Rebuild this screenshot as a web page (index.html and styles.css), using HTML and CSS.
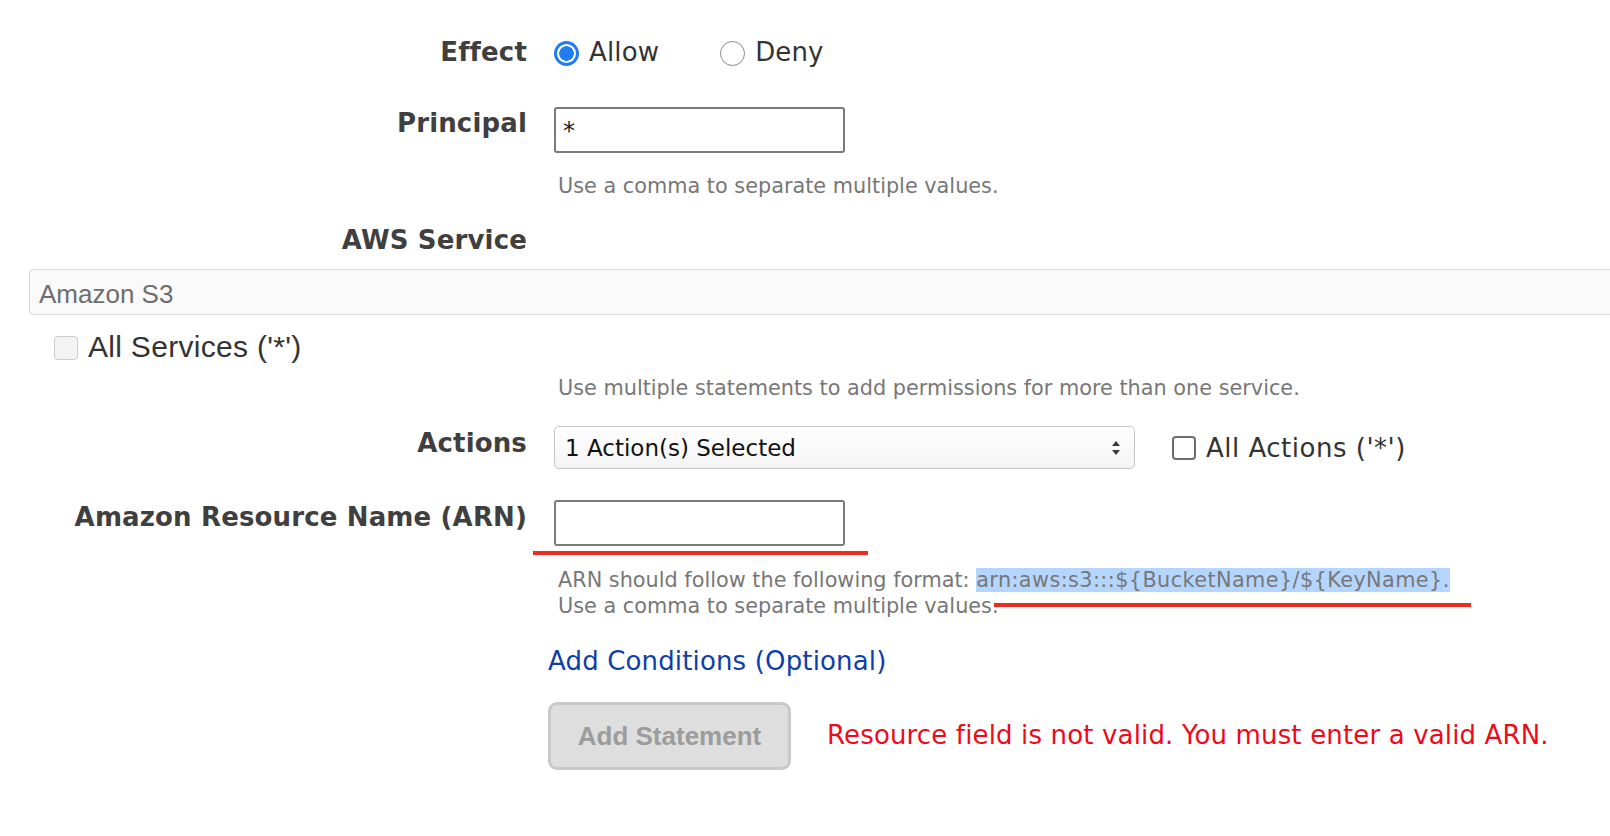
FILE: index.html
```html
<!DOCTYPE html>
<html lang="en">
<head>
<meta charset="utf-8">
<title>Policy Statement</title>
<link rel="stylesheet" href="styles.css">
</head>
<body>
<main class="form">
  <div class="row row-effect">
    <div class="label">Effect</div>
    <div class="control radios">
      <label class="radio-opt"><span class="radio checked"></span><span>Allow</span></label>
      <label class="radio-opt"><span class="radio"></span><span>Deny</span></label>
    </div>
  </div>

  <div class="row row-principal">
    <div class="label">Principal</div>
    <div class="control"><div class="textbox">*</div></div>
  </div>
  <p class="hint hint-principal">Use a comma to separate multiple values.</p>

  <div class="row row-service">
    <div class="label">AWS Service</div>
  </div>
  <div class="service-field">Amazon S3</div>
  <label class="all-services"><span class="cb cb-disabled"></span><span>All Services ('*')</span></label>
  <p class="hint hint-service">Use multiple statements to add permissions for more than one service.</p>

  <div class="row row-actions">
    <div class="label">Actions</div>
    <div class="control actions-ctl">
      <div class="select">
        <span>1 Action(s) Selected</span>
        <svg class="arrows" width="10" height="16" viewBox="0 0 10 16"><path d="M5 1 L9 6 L1 6 Z M5 15 L9 10 L1 10 Z" fill="#3a3a3a"/></svg>
      </div>
      <label class="all-actions"><span class="cb"></span><span>All Actions ('*')</span></label>
    </div>
  </div>

  <div class="row row-arn">
    <div class="label">Amazon Resource Name (ARN)</div>
    <div class="control"><div class="textbox"></div></div>
  </div>
  <div class="hint hint-arn">
    <div>ARN should follow the following format: <span class="sel">arn:aws:s3:::${BucketName}/${KeyName}.</span></div>
    <div>Use a comma to separate multiple values.</div>
  </div>

  <a class="add-conditions" href="#">Add Conditions (Optional)</a>

  <div class="submit-row">
    <button class="add-btn" type="button" disabled>Add Statement</button>
    <span class="error">Resource field is not valid. You must enter a valid ARN.</span>
  </div>

  <div class="mark mark-input"></div>
  <div class="mark mark-format"></div>
</main>
</body>
</html>
```

FILE: styles.css
```css
html, body {
  margin: 0;
  padding: 0;
  background: #ffffff;
  overflow: hidden;
}

body {
  font-family: "DejaVu Sans", Verdana, sans-serif;
  color: #333333;
  letter-spacing: 0.15px;
}

.form {
  position: relative;
  padding-top: 37px;
  width: 1610px;
  height: 836px;
  box-sizing: border-box;
}

.row {
  display: flex;
  align-items: flex-start;
}

.label {
  width: 527px;
  flex-shrink: 0;
  text-align: right;
  font-weight: 700;
  font-size: 26px;
  line-height: 30px;
  color: #3f3f3f;
}

.control {
  margin-left: 27px;
}

/* Effect */
.radios {
  display: flex;
  align-items: center;
  gap: 61px;
  height: 30px;
}

.radio-opt {
  display: flex;
  align-items: center;
  gap: 10px;
  font-size: 26px;
  line-height: 30px;
  color: #333333;
}

.radio {
  width: 25px;
  height: 25px;
  box-sizing: border-box;
  border-radius: 50%;
  border: 1.5px solid #8a8a8a;
  background: #ffffff;
  margin-top: 3px;
}

.radio.checked {
  border: 3px solid #1f7cf3;
  background: radial-gradient(circle, #1f7cf3 0 7px, #ffffff 7.5px);
}

/* Principal */
.row-principal {
  margin-top: 40px;
}

.row-principal .label {
  padding-top: 1px;
}

.textbox {
  width: 291px;
  height: 46px;
  box-sizing: border-box;
  border: 2px solid #7a7a7a;
  border-radius: 3px;
  padding: 2px 7px 0;
  font-size: 24px;
  line-height: 40px;
  color: #222222;
}

.hint {
  margin: 0;
  margin-left: 558px;
  font-size: 20.8px;
  line-height: 24px;
  color: #777777;
  letter-spacing: 0;
}

.hint-principal {
  margin-top: 21px;
}

/* Service */
.row-service {
  margin-top: 27px;
}

.service-field {
  margin-top: 14px;
  margin-left: 29px;
  width: 1620px;
  height: 46px;
  box-sizing: border-box;
  border: 1px solid #dadada;
  border-radius: 4px;
  background: #fafafa;
  padding: 4px 0 0 9px;
  font-family: "Liberation Sans", Arial, sans-serif;
  font-size: 26px;
  line-height: 40px;
  color: #6e6e6e;
  letter-spacing: 0;
}

.all-services {
  display: flex;
  align-items: center;
  gap: 10px;
  margin-top: 15px;
  margin-left: 54px;
  height: 34px;
  font-family: "Liberation Sans", Arial, sans-serif;
  font-size: 30px;
  letter-spacing: 0.3px;
  color: #333333;
}

.cb {
  width: 24px;
  height: 24px;
  box-sizing: border-box;
  border: 2px solid #6e6e6e;
  border-radius: 4px;
  background: #ffffff;
  flex-shrink: 0;
}

.cb.cb-disabled {
  border: 1px solid #cdcdcd;
  background: #f3f3f3;
  margin-top: 2px;
}

.hint-service {
  margin-top: 12px;
}

/* Actions */
.row-actions {
  margin-top: 26px;
}

.row-actions .label {
  padding-top: 2px;
}

.actions-ctl {
  display: flex;
  align-items: center;
  gap: 37px;
}

.select {
  width: 581px;
  height: 43px;
  box-sizing: border-box;
  border: 1px solid #c6c6c6;
  border-radius: 5px;
  background: linear-gradient(#ffffff, #f4f4f4);
  display: flex;
  align-items: center;
  justify-content: space-between;
  padding: 0 13px 0 10px;
  font-size: 23px;
  letter-spacing: 0;
  color: #111111;
}

.all-actions {
  display: flex;
  align-items: center;
  gap: 10px;
  font-size: 26px;
  letter-spacing: 0.5px;
  line-height: 30px;
  color: #333333;
}

/* ARN */
.row-arn {
  margin-top: 31px;
}

.row-arn .label {
  padding-top: 2px;
}

.hint-arn {
  margin-top: 21px;
  line-height: 26px;
}

.sel {
  background: #b4d6fe;
  letter-spacing: 0.4px;
}

.add-conditions {
  display: block;
  width: max-content;
  margin-top: 27px;
  margin-left: 548px;
  font-size: 26px;
  line-height: 30px;
  color: #0f3ea8;
  text-decoration: none;
}

.submit-row {
  display: flex;
  align-items: center;
  gap: 36px;
  margin-top: 26px;
  padding-left: 548px;
}

.add-btn {
  width: 243px;
  height: 68px;
  box-sizing: border-box;
  border: 3px solid #c9c9c9;
  border-radius: 9px;
  background: #dedede;
  color: #9c9c9c;
  font-family: "Liberation Sans", Arial, sans-serif;
  font-weight: 700;
  font-size: 26px;
  letter-spacing: 0;
  padding: 0;
}

.error {
  font-size: 26px;
  line-height: 30px;
  margin-top: -2px;
  color: #ee0a1a;
}

/* annotation underlines */
.mark {
  position: absolute;
  height: 4px;
  background: #ef2a1e;
}

.mark-input {
  left: 533px;
  top: 551px;
  width: 335px;
}

.mark-format {
  left: 994px;
  top: 603px;
  width: 477px;
}
```
